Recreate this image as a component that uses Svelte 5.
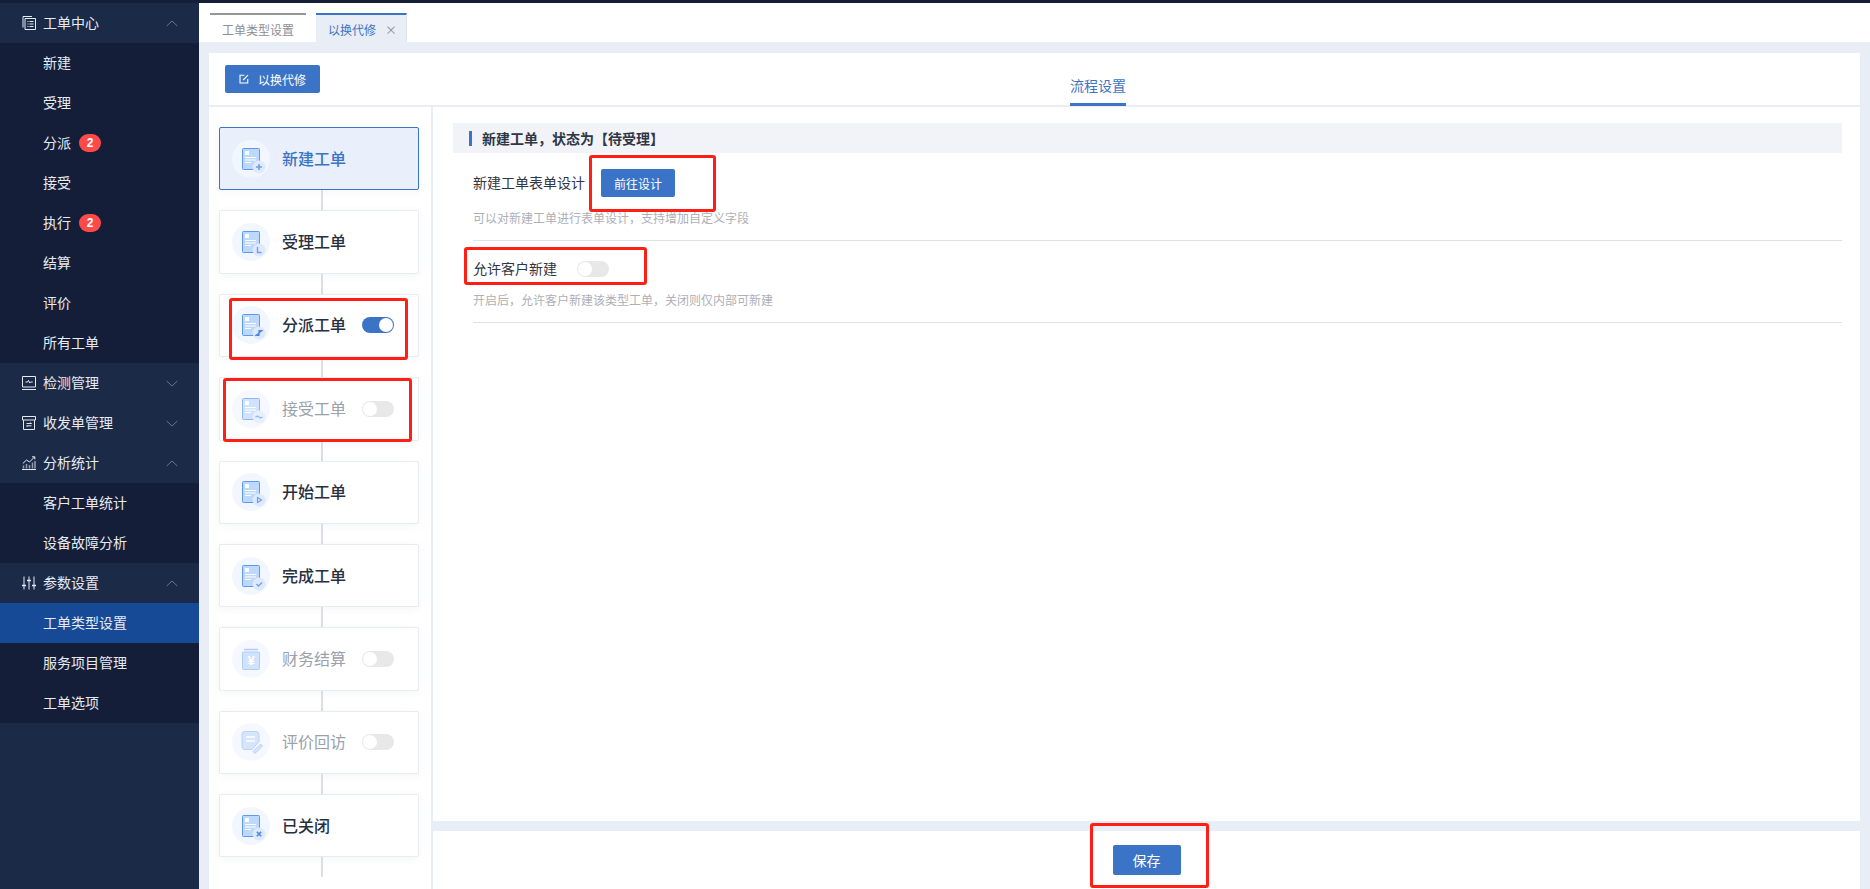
<script>
  const menu = [
    {name: '工单中心', icon: 'orders', open: true, items: [
      {name: '新建'}, {name: '受理'}, {name: '分派', badge: 2}, {name: '接受'},
      {name: '执行', badge: 2}, {name: '结算'}, {name: '评价'}, {name: '所有工单'}
    ]},
    {name: '检测管理', icon: 'monitor'},
    {name: '收发单管理', icon: 'box'},
    {name: '分析统计', icon: 'chart', open: true, items: [{name: '客户工单统计'}, {name: '设备故障分析'}]},
    {name: '参数设置', icon: 'sliders', open: true, items: [
      {name: '工单类型设置', active: true}, {name: '服务项目管理'}, {name: '工单选项'}
    ]}
  ];

  const steps = [
    {name: '新建工单', mark: 'plus', active: true},
    {name: '受理工单', mark: 'clock'},
    {name: '分派工单', mark: 'swap', toggle: 'on'},
    {name: '接受工单', mark: 'wave', toggle: 'off', muted: true},
    {name: '开始工单', mark: 'play'},
    {name: '完成工单', mark: 'check'},
    {name: '财务结算', kind: 'money', toggle: 'off', muted: true},
    {name: '评价回访', kind: 'note', toggle: 'off', muted: true},
    {name: '已关闭', mark: 'close'}
  ];

  // red review annotations drawn on top of the screenshot
  const notes = [
    {x: 589, y: 155, w: 127, h: 57},
    {x: 464, y: 247, w: 183, h: 38},
    {x: 229, y: 298, w: 179, h: 62},
    {x: 223, y: 378, w: 189, h: 64},
    {x: 1090, y: 823, w: 119, h: 65}
  ];
</script>

{#snippet menuIcon(type)}
  <svg class="menu-icon" viewBox="0 0 14 14" fill="none" stroke="currentColor" stroke-width="1">
    {#if type === 'orders'}
      <path d="M1 11.500V.5h9" /><path d="M3 2.500h10.500v11H3z" /><path d="M5.500 5.500h1M7.500 5.500h4M5.500 8h1M7.500 8h4M5.500 10.500h1M7.500 10.500h4" />
    {:else if type === 'monitor'}
      <path d="M.5 .5h13v10.500H.5z" /><path d="M0 13.500h14" /><path d="M3.500 6h2l1-1.600 1.200 2.600 1-1h2" />
    {:else if type === 'box'}
      <path d="M.5 .5h13v3.500H.5z" /><path d="M1.500 4v9.500h11V4" /><path d="M4.500 7.500h5l-1-1M9.500 9.800h-5l1 1" />
    {:else if type === 'chart'}
      <path d="M0 13.500h14" /><path d="M1.500 12.500V9.500M4.500 12.500V8M7.500 12.500V9M10.500 12.500V6.500M13 12.500V5" stroke-width="1.500" stroke-opacity=".6" /><path d="M.8 7.500 4.500 4l3 2 5-5M10 .8h2.800v2.600" />
    {:else}
      <path d="M2 .5v13M7 .5v13M12 .5v13" /><path d="M0 9.500h4M5 4.500h4M10 9.500h4" stroke-width="1.400" />
    {/if}
  </svg>
{/snippet}

{#snippet stepIcon(step)}
  <svg class="step-icon" viewBox="0 0 38 38">
    <circle cx="19" cy="19" r="19" fill="#f1f6ff" />
    {#if step.kind === 'money'}
      <path d="M12 9.500h14" stroke="#8fb6f5" stroke-width="1.500" />
      <rect x="10.500" y="12" width="17" height="17.500" rx="1" fill="#bcd8fd" stroke="#8fb6f5" />
      <text x="19" y="25" class="yen">¥</text>
    {:else if step.kind === 'note'}
      <path d="M13 8.500h11a3 3 0 0 1 3 3v7l-7 8h-7a3 3 0 0 1-3-3v-12a3 3 0 0 1 3-3z" fill="#c5dafc" stroke="#9cbef6" />
      <path d="M14 14h9M14 18h9" stroke="#fff" stroke-width="1.400" />
      <path d="M21 28.500l7.500-7.500 2 2-7.500 7.500z" fill="#c5dafc" stroke="#9cbef6" />
    {:else}
      <rect x="10.500" y="8.500" width="17" height="21" rx="1" fill="#bcd8fd" stroke="#5f98f2" />
      <rect x="13" y="11" width="4" height="4" fill="#fff" />
      <path d="M13 17.500h11M13 20h11M13 22.500h6" stroke="#fff" stroke-width="1.200" />
      <circle cx="27" cy="27" r="6.500" fill="#dfe9fc" />
      {#if step.mark === 'plus'}
        <path d="M24 27h6M27 24v6" stroke="#6b9ff0" stroke-width="1.600" />
      {:else if step.mark === 'clock'}
        <path d="M25.500 24v5.500h4" fill="none" stroke="#6b9ff0" stroke-width="1.400" />
      {:else if step.mark === 'swap'}
        <path d="M24 29.500l3-2.500v2.500zM30 24.500l-3 2.500v-2.500z" fill="#4d86e0" stroke="#4d86e0" stroke-width="1.200" />
      {:else if step.mark === 'wave'}
        <path d="M23.500 27q2-1.500 3.500 0t3.500 0" fill="none" stroke="#6b9ff0" stroke-width="1.400" />
      {:else if step.mark === 'play'}
        <path d="M25.500 24.500l4 2.500-4 2.500z" fill="none" stroke="#6b9ff0" stroke-width="1.200" />
      {:else if step.mark === 'check'}
        <path d="M24.500 27l2 2 3.500-3.500" fill="none" stroke="#6b9ff0" stroke-width="1.300" />
      {:else}
        <path d="M24.800 24.800l4.400 4.400M29.200 24.800l-4.400 4.400" stroke="#4d86e0" stroke-width="1.600" />
      {/if}
    {/if}
  </svg>
{/snippet}

{#snippet toggle(on)}
  <span class="switch" class:on><i></i></span>
{/snippet}

<div class="page">
  <div class="topline"></div>
  <div class="frame">
    <aside class="sidebar">
      {#each menu as group}
        <div class="group-head">
          {@render menuIcon(group.icon)}
          <span class="label">{group.name}</span>
          <svg class="chevron" viewBox="0 0 12 7" fill="none" stroke="currentColor">
            <path d={group.open ? 'M.7 6 6 1l5.300 5' : 'M.7 1 6 6l5.300-5'} />
          </svg>
        </div>
        {#if group.items}
          <div class="group-items">
            {#each group.items as item}
              <div class="item" class:active={item.active}>
                <span class="label">{item.name}</span>
                {#if item.badge}<b class="badge">{item.badge}</b>{/if}
              </div>
            {/each}
          </div>
        {/if}
      {/each}
    </aside>

    <main class="main">
      <nav class="tabs">
        <div class="tab">工单类型设置</div>
        <div class="tab current">以换代修<span class="tab-close">×</span></div>
      </nav>

      <section class="panel">
        <header class="panel-head">
          <button class="btn type-btn">
            <svg viewBox="0 0 12 12" fill="none" stroke="#fff" stroke-width="1.300">
              <path d="M6.500 1.500H1.200v9.300h9.300V6" /><path d="M5 7.200 10.800 1.300" />
            </svg>
            以换代修
          </button>
          <div class="head-tab"><span>流程设置</span></div>
        </header>

        <div class="panel-body">
          <div class="steps">
            {#each steps as step}
              <div class="step" class:active={step.active} class:muted={step.muted}>
                {@render stepIcon(step)}
                <span class="step-name">{step.name}</span>
                {#if step.toggle}{@render toggle(step.toggle === 'on')}{/if}
              </div>
              <div class="link"></div>
            {/each}
          </div>

          <div class="detail">
            <div class="detail-main">
              <h3 class="section-title"><span>新建工单，状态为【待受理】</span></h3>
              <div class="setting design">
                <div class="setting-row">
                  <span>新建工单表单设计</span>
                  <button class="btn design-btn">前往设计</button>
                </div>
                <p>可以对新建工单进行表单设计，支持增加自定义字段</p>
              </div>
              <div class="setting allow">
                <div class="setting-row">
                  <span>允许客户新建</span>
                  {@render toggle(false)}
                </div>
                <p>开启后，允许客户新建该类型工单，关闭则仅内部可新建</p>
              </div>
            </div>
            <footer class="detail-foot">
              <button class="btn save-btn">保存</button>
            </footer>
          </div>
        </div>
      </section>
    </main>
  </div>

  {#each notes as n}
    <div class="note" style="left:{n.x}px;top:{n.y}px;width:{n.w}px;height:{n.h}px"></div>
  {/each}
</div>

<style>
  :global(body) {
    margin: 0;
    background: #e9edf5;
  }

  .page {
    position: relative;
    width: 1870px;
    height: 889px;
    overflow: hidden;
    display: flex;
    flex-direction: column;
    font-family: "Noto Sans CJK SC", "Noto Sans", sans-serif;
    color: #303643;
  }

  .topline {
    height: 3px;
    flex: none;
    background: #141e38;
  }

  .frame {
    flex: 1;
    display: flex;
    min-height: 0;
  }

  .sidebar {
    width: 199px;
    flex: none;
    background: #1b2a47;
    color: #e6ebf3;
    font-size: 14px;
  }

  .label {
    margin-bottom: 2px;
  }

  .group-head {
    height: 40px;
    display: flex;
    align-items: center;
    padding-left: 22px;
  }

  .menu-icon {
    width: 14px;
    height: 14px;
    margin-right: 7px;
    flex: none;
  }

  .chevron {
    width: 12px;
    height: 7px;
    margin-left: auto;
    margin-right: 21px;
    color: #6c7689;
  }

  .group-items {
    background: #141e38;
  }

  .item {
    height: 40px;
    display: flex;
    align-items: center;
    padding-left: 43px;
  }

  .item.active {
    background: #164a96;
  }

  .badge {
    width: 22px;
    height: 18px;
    margin-left: 8px;
    border-radius: 9px;
    background: #ff4a4a;
    color: #fff;
    font: bold 12px/18px "Liberation Sans", sans-serif;
    text-align: center;
  }

  .main {
    flex: 1;
    min-width: 0;
    display: flex;
    flex-direction: column;
  }

  .tabs {
    height: 39px;
    flex: none;
    display: flex;
    align-items: flex-end;
    padding-left: 10px;
    background: #fff;
    font-size: 12px;
  }

  .tab {
    height: 29px;
    width: 107px;
    box-sizing: border-box;
    padding-left: 13px;
    line-height: 29px;
    color: #8d8f94;
    border-top: 2px solid transparent;
    background: linear-gradient(#94969c, #94969c) 1px 0 / 96px 2px no-repeat border-box;
  }

  .tab.current {
    width: 91px;
    padding-left: 12px;
    color: #3b74c6;
    background: #e9edf5;
    border-top-color: #3b74c6;
    border-right: 1px solid #dfe3ec;
  }

  .tab-close {
    margin-left: 9px;
    color: #8d9099;
    font-size: 12px;
  }

  .panel {
    flex: 1;
    min-height: 0;
    margin: 11px 10px 0;
    background: #fff;
    display: flex;
    flex-direction: column;
  }

  .panel-head {
    position: relative;
    height: 54px;
    flex: none;
    box-sizing: border-box;
    padding: 12px 0 0 16px;
    border-bottom: 2px solid #e9edf5;
  }

  .btn {
    border: none;
    border-radius: 2px;
    background: #3b74c6;
    color: #fff;
    font-family: inherit;
    font-size: 12px;
    padding: 0;
  }

  .type-btn {
    width: 95px;
    height: 28px;
    display: flex;
    align-items: center;
    padding-left: 14px;
    gap: 9px;
  }

  .type-btn svg {
    width: 10px;
    height: 10px;
  }

  .head-tab {
    position: absolute;
    left: 861px;
    bottom: -1px;
    width: 56px;
    height: 38px;
    box-sizing: border-box;
    border-bottom: 3px solid #3b74c6;
    color: #3b74c6;
    font-size: 14px;
    line-height: 34px;
    white-space: nowrap;
  }

  .panel-body {
    flex: 1;
    min-height: 0;
    display: flex;
  }

  .steps {
    width: 224px;
    box-sizing: border-box;
    flex: none;
    padding: 20px 0 0 10px;
    border-right: 2px solid #e9edf5;
  }

  .step {
    width: 200px;
    height: 63.375px;
    box-sizing: border-box;
    display: flex;
    align-items: center;
    padding: 0 24px 0 12px;
    background: #fff;
    border: 1px solid #e8ebf3;
    border-radius: 2px;
    box-shadow: 0 2px 8px rgba(70, 90, 140, 0.06);
    color: #27303f;
    font-size: 16px;
    font-weight: 500;
  }

  .step.active {
    background: #eaf0fb;
    border-color: #3b74c6;
    color: #3b74c6;
  }

  .step.muted {
    color: #9aa1ab;
    font-weight: 400;
  }

  .step.muted .step-icon {
    opacity: 0.7;
  }

  .step-icon {
    width: 38px;
    height: 38px;
    flex: none;
    margin-right: 12px;
  }

  .yen {
    fill: #fff;
    font: bold 13px "Liberation Sans", sans-serif;
    text-anchor: middle;
  }

  .step-name {
    white-space: nowrap;
    margin-bottom: 2px;
  }

  .switch {
    width: 32px;
    height: 16px;
    flex: none;
    margin-left: auto;
    padding: 1px;
    box-sizing: border-box;
    display: inline-flex;
    border-radius: 8px;
    background: #e8e8e8;
  }

  .switch i {
    width: 14px;
    height: 14px;
    border-radius: 50%;
    background: #fff;
  }

  .switch.on {
    background: #3b74c6;
    justify-content: flex-end;
  }

  .link {
    width: 2px;
    height: 20px;
    margin-left: 102px;
    background: #dcdee3;
  }

  .detail {
    flex: 1;
    min-width: 0;
    display: flex;
    flex-direction: column;
    background: #e9edf5;
  }

  .detail-main {
    flex: 1;
    min-height: 0;
    background: #fff;
    padding: 16px 18px 0 20px;
    margin-bottom: 10px;
  }

  .section-title {
    margin: 0;
    height: 30px;
    display: flex;
    align-items: center;
    padding-left: 16px;
    background: #f1f3f8;
    color: #303643;
    font-size: 14px;
    font-weight: 700;
  }

  .section-title span {
    border-left: 3px solid #3b74c6;
    padding-left: 10px;
    line-height: 15px;
  }

  .setting {
    margin-left: 20px;
    border-bottom: 1px solid #dfe1e8;
    font-size: 14px;
    box-sizing: border-box;
  }

  .setting.design {
    height: 88px;
    padding-top: 16px;
  }

  .setting.allow {
    height: 82px;
    padding-top: 20px;
  }

  .setting-row {
    display: flex;
    align-items: center;
    gap: 20px;
  }

  .design .setting-row {
    gap: 16px;
  }

  .allow .setting-row {
    height: 16px;
  }

  .setting-row > span:first-child {
    margin-bottom: 2px;
  }

  .setting-row .switch {
    margin-left: 0;
  }

  .setting p {
    margin: 12px 0 0;
    color: #aeb0b5;
    font-size: 12px;
    line-height: 17px;
  }

  .allow p {
    margin-top: 14px;
  }

  .design-btn {
    width: 74px;
    height: 28px;
  }

  .detail-foot {
    height: 58px;
    flex: none;
    background: #fff;
    display: flex;
    justify-content: center;
    padding-top: 14px;
    box-sizing: border-box;
  }

  .save-btn {
    width: 68px;
    height: 30px;
    font-size: 14px;
  }

  .note {
    position: absolute;
    box-sizing: border-box;
    border: 3px solid #ff1f14;
    border-radius: 3px;
  }
</style>
